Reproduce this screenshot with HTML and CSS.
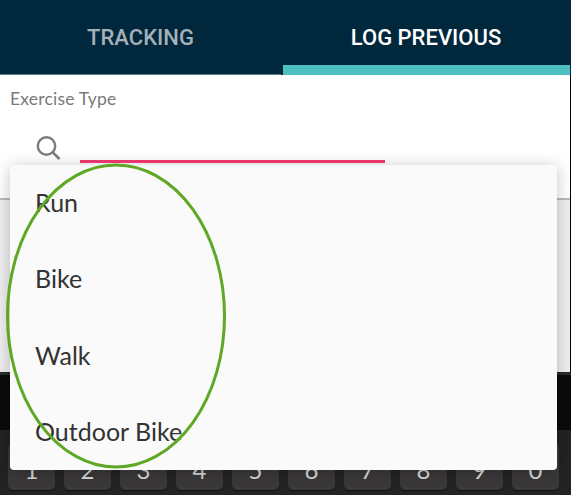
FILE: index.html
```html
<!DOCTYPE html>
<html lang="en">
<head>
<meta charset="utf-8">
<title>Log previous exercise</title>
<link rel="stylesheet" href="styles.css">
</head>
<body>
<div class="app">
  <header class="tabs">
    <div class="tab">TRACKING</div>
    <div class="tab tab-active">LOG PREVIOUS</div>
  </header>
  <section class="field">
    <div class="field-label">Exercise Type</div>
    <div class="search-row">
      <svg class="search-icon" width="30" height="30" viewBox="0 0 30 30" aria-hidden="true">
        <circle cx="12.5" cy="12" r="8.7" fill="none" stroke="#7c7c7c" stroke-width="2.4"/>
        <path d="M18.8 18.3 L25.5 25" fill="none" stroke="#7c7c7c" stroke-width="2.6"/>
      </svg>
      <div class="search-input"></div>
    </div>
  </section>
  <div class="backdrop"></div>
  <div class="keyboard-strip"></div>
  <div class="keyboard">
    <div class="key">1</div>
    <div class="key">2</div>
    <div class="key">3</div>
    <div class="key">4</div>
    <div class="key">5</div>
    <div class="key">6</div>
    <div class="key">7</div>
    <div class="key">8</div>
    <div class="key">9</div>
    <div class="key">0</div>
  </div>
  <ul class="menu">
    <li class="menu-item">Run</li>
    <li class="menu-item">Bike</li>
    <li class="menu-item">Walk</li>
    <li class="menu-item">Outdoor Bike</li>
  </ul>
  <svg class="annotation" width="224" height="310" viewBox="0 0 224 310" aria-hidden="true">
    <ellipse cx="112" cy="155" rx="108.5" ry="151" fill="none" stroke="#5fa826" stroke-width="3"/>
  </svg>
</div>
</body>
</html>
```
FILE: styles.css
```css
* {
  box-sizing: border-box;
}

html,
body {
  margin: 0;
  padding: 0;
  background: #050505;
}

.app {
  position: relative;
  display: flex;
  flex-direction: column;
  width: 571px;
  height: 495px;
  overflow: hidden;
  font-family: "Lato", "Liberation Sans", sans-serif;
}

.tabs {
  display: flex;
  height: 75px;
  background: #00273b;
  font-family: "Roboto", "Liberation Sans", sans-serif;
  font-weight: 500;
  font-size: 22px;
}

.tab {
  flex: none;
  width: 281px;
  height: 75px;
  padding-top: 25px;
  line-height: 26px;
  text-align: center;
  color: #a4b1b8;
  border-bottom: 1px solid #5d8290;
}

.tab-active {
  width: 287px;
  margin-left: 1.5px;
  color: #ffffff;
  border-bottom: 10px solid #4dc1c2;
}

.field {
  width: 570px;
  height: 125px;
  padding: 13px 0 0 10px;
  background: #ffffff;
  border-bottom: 2px solid #b9b9b9;
}

.field-label {
  height: 22px;
  font-size: 17.5px;
  letter-spacing: 0.2px;
  line-height: 22px;
  color: #7a7a7a;
}

.search-row {
  display: flex;
  align-items: flex-start;
  height: 40px;
  margin-top: 24px;
}

.search-icon {
  display: block;
  flex: none;
  margin: 0 0 0 24px;
}

.search-input {
  position: relative;
  z-index: 1;
  width: 305px;
  height: 3px;
  margin: 26px 0 0 16px;
  background: #e8356b;
}

.backdrop {
  width: 570px;
  height: 172px;
  background: #eeeeee;
}

.keyboard-strip {
  width: 571px;
  height: 58px;
  background: #0b0b0b;
  border-top: 3px solid #2a2a2a;
}

.keyboard {
  display: flex;
  flex: 1;
  gap: 9px;
  padding: 13px 0 5px 8px;
  background: #242323;
}

.key {
  width: 47px;
  height: 47px;
  padding-top: 13px;
  border-radius: 5px;
  background: #3a3839;
  box-shadow: 0 1px 0 #111111;
  font-size: 24px;
  line-height: 28px;
  text-align: center;
  color: #d8d8d8;
}

.menu {
  position: absolute;
  top: 165px;
  left: 10px;
  width: 547px;
  height: 305px;
  margin: 0;
  padding: 0;
  list-style: none;
  background: #fafafa;
  border-radius: 4px;
  box-shadow: 0 2px 16px rgba(0, 0, 0, 0.24);
}

.menu-item {
  height: 76.25px;
  padding-left: 25px;
  font-size: 25px;
  line-height: 74px;
  color: #333333;
}

.annotation {
  position: absolute;
  top: 161px;
  left: 4px;
}
```
